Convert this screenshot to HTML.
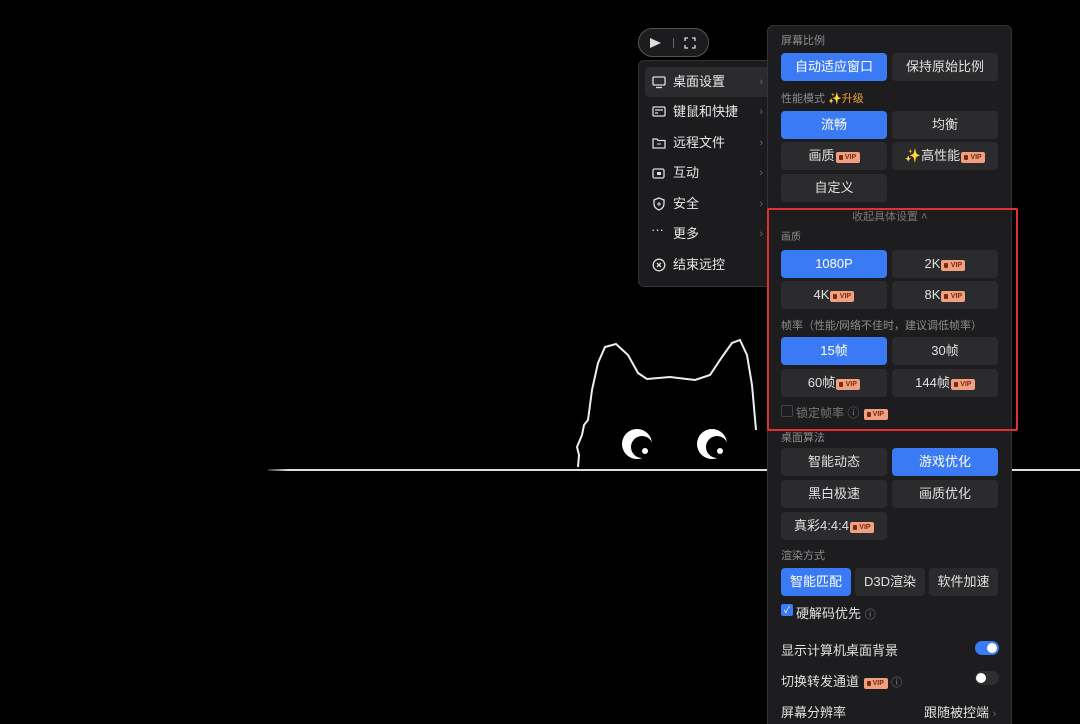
<!DOCTYPE html>
<html style="overflow:hidden;width:1080px;height:724px"><head><meta charset="utf-8"><style>
*{margin:0;padding:0;box-sizing:border-box}
body{width:1080px;height:724px;background:#000;overflow:hidden;position:relative;font-family:"Liberation Sans","Noto Sans CJK SC",sans-serif;color:#e8e8e8}
.abs{position:absolute}
.pill{left:638px;top:28px;width:71px;height:29px;border:1px solid #555;border-radius:15px;background:#1c1c1e}
.menu{left:638px;top:60px;width:140px;height:227px;background:#1c1c1e;border:1px solid #333;border-radius:6px}
.mi{position:absolute;left:6px;width:126px;height:30px;font-size:13px;line-height:30px;padding-left:28px;color:#e8e8e8}
.mi.sel{background:#2b2b2d;border-radius:5px}
.mi .ic{position:absolute;left:7px;top:8px;width:14px;height:14px}
.mi .ar{position:absolute;right:8px;top:0;color:#666;font-size:11px}
.panel{left:767px;top:25px;width:245px;height:710px;background:#1d1d1f;border:1px solid #333;border-radius:6px}
.lb{position:absolute;left:781px;font-size:11px;color:#8c8c8c}
.b{position:absolute;height:28px;background:#2b2b2d;border-radius:4px;font-size:13px;line-height:28px;text-align:center;color:#e0e0e0}
.b.on{background:#3a7af5;color:#fff}
.c1{left:781px;width:106px}.c2{left:892px;width:106px}
.vip{display:inline-block;vertical-align:1px;height:11px;line-height:11px;font-size:7px;padding:0 3px 0 9px;background:#f0a080;color:#7a2a10;border-radius:2px;margin-left:1px;font-weight:bold;position:relative;width:24px}
.vip:before{content:"";position:absolute;left:3px;top:3px;width:4px;height:5px;background:#7a2a10;border-radius:1px}
.red{left:767px;top:208px;width:251px;height:223px;border:2px solid #e03030;border-radius:2px}
.row{position:absolute;left:781px;font-size:13px;color:#e0e0e0}
</style></head><body>
<div class="abs" style="left:268px;top:469px;width:812px;height:2px;background:linear-gradient(90deg,rgba(255,255,255,0.2),#ddd 20px,#ddd)"></div>
<svg class="abs" style="left:570px;top:335px" width="200" height="140" viewBox="0 0 200 140">
<path d="M8 132 L9 120 L7 112 L12 100 L14 90 L18 85 L22 55 L28 28 L35 12 L46 9 L58 20 L68 38 L77 44 L100 42 L125 45 L140 40 L152 22 L162 8 L170 5 L177 20 L182 50 L186 95" fill="none" stroke="#eee" stroke-width="2"/>
<circle cx="67" cy="109" r="15" fill="#fff"/><circle cx="72" cy="112" r="11" fill="#000"/><circle cx="75" cy="116" r="3" fill="#fff"/>
<circle cx="142" cy="109" r="15" fill="#fff"/><circle cx="147" cy="112" r="11" fill="#000"/><circle cx="150" cy="116" r="3" fill="#fff"/>
</svg>
<div class="abs pill"><svg class="abs" style="left:10px;top:8px" width="14" height="12"><path d="M1 1 L12 6 L1 11 Z M1 1 L6 6 L1 11" fill="#ddd"/></svg><div class="abs" style="left:34px;top:9px;width:1px;height:10px;background:#666"></div><svg class="abs" style="left:45px;top:8px" width="12" height="12"><path d="M1 4V1H4M8 1H11V4M11 8V11H8M4 11H1V8" fill="none" stroke="#ddd" stroke-width="1.3"/></svg></div>
<div class="abs menu">
<div class="mi sel" style="top:6px"><svg class="ic" viewBox="0 0 14 14"><rect x="1" y="2" width="12" height="8" rx="1" fill="none" stroke="#ddd" stroke-width="1.3"/><path d="M4 12.5H10" stroke="#ddd" stroke-width="1.3"/></svg>桌面设置<span class="ar">›</span></div>
<div class="mi" style="top:36px"><svg class="ic" viewBox="0 0 14 14"><rect x="1" y="2" width="12" height="9" rx="1" fill="none" stroke="#ddd" stroke-width="1.3"/><path d="M3 5h8M3 8h3" stroke="#ddd" stroke-width="1.3"/></svg>键鼠和快捷<span class="ar">›</span></div>
<div class="mi" style="top:67px"><svg class="ic" viewBox="0 0 14 14"><path d="M1 3h4l1 1.5h7V12H1Z" fill="none" stroke="#ddd" stroke-width="1.3"/><path d="M5 8h4" stroke="#ddd"/></svg>远程文件<span class="ar">›</span></div>
<div class="mi" style="top:97px"><svg class="ic" viewBox="0 0 14 14"><rect x="1" y="3" width="11" height="9" rx="1.5" fill="none" stroke="#ddd" stroke-width="1.3"/><rect x="5" y="6" width="4" height="3" fill="#ddd"/></svg>互动<span class="ar">›</span></div>
<div class="mi" style="top:128px"><svg class="ic" viewBox="0 0 14 14"><path d="M7 1L12 3V7C12 10 9.5 12 7 13C4.5 12 2 10 2 7V3Z" fill="none" stroke="#ddd" stroke-width="1.3"/><path d="M7 5v4M5 7h4" stroke="#ddd"/></svg>安全<span class="ar">›</span></div>
<div class="mi" style="top:158px"><span class="abs" style="left:6px;top:-4px;font-size:13px">···</span>更多<span class="ar">›</span></div>
<div class="mi" style="top:189px"><svg class="ic" viewBox="0 0 14 14"><circle cx="7" cy="7" r="5.8" fill="none" stroke="#ddd" stroke-width="1.3"/><path d="M5 5l4 4M9 5l-4 4" stroke="#ddd" stroke-width="1.3"/></svg>结束远控</div>
</div>
<div class="abs panel"></div>
<div class="lb" style="top:32px">屏幕比例</div>
<div class="b on c1" style="top:53px">自动适应窗口</div><div class="b c2" style="top:53px">保持原始比例</div>
<div class="lb" style="top:90px">性能模式 <span style="color:#f0a020">✨升级</span></div>
<div class="b on c1" style="top:111px">流畅</div><div class="b c2" style="top:111px">均衡</div>
<div class="b c1" style="top:142px">画质<span class="vip">VIP</span></div><div class="b c2" style="top:142px">✨高性能<span class="vip">VIP</span></div>
<div class="b c1" style="top:174px">自定义</div>
<div class="lb" style="top:208px;left:852px;color:#777">收起具体设置 ˄</div>
<div class="lb" style="top:228px;font-size:10px">画质</div>
<div class="b on c1" style="top:250px">1080P</div><div class="b c2" style="top:250px">2K<span class="vip">VIP</span></div>
<div class="b c1" style="top:281px">4K<span class="vip">VIP</span></div><div class="b c2" style="top:281px">8K<span class="vip">VIP</span></div>
<div class="lb" style="top:317px">帧率（性能/网络不佳时，建议调低帧率）</div>
<div class="b on c1" style="top:337px">15帧</div><div class="b c2" style="top:337px">30帧</div>
<div class="b c1" style="top:369px">60帧<span class="vip">VIP</span></div><div class="b c2" style="top:369px">144帧<span class="vip">VIP</span></div>
<div class="abs" style="left:781px;top:405px;width:12px;height:12px;border:1px solid #444;border-radius:2px"></div>
<div class="lb" style="top:404px;left:796px;font-size:12px;color:#777">锁定帧率 ⓘ <span class="vip">VIP</span></div>
<div class="abs red"></div>
<div class="lb" style="top:429px">桌面算法</div>
<div class="b c1" style="top:448px">智能动态</div><div class="b on c2" style="top:448px">游戏优化</div>
<div class="b c1" style="top:480px">黑白极速</div><div class="b c2" style="top:480px">画质优化</div>
<div class="b c1" style="top:512px">真彩4:4:4<span class="vip">VIP</span></div>
<div class="lb" style="top:547px">渲染方式</div>
<div class="b on" style="top:568px;left:781px;width:70px">智能匹配</div><div class="b" style="top:568px;left:855px;width:70px">D3D渲染</div><div class="b" style="top:568px;left:929px;width:69px">软件加速</div>
<div class="abs" style="left:781px;top:604px;width:12px;height:12px;background:#3a7af5;border-radius:2px;color:#fff;font-size:9px;line-height:12px;text-align:center">✓</div>
<div class="row" style="top:603px;left:796px">硬解码优先 <span style="color:#888;font-size:11px">ⓘ</span></div>
<div class="row" style="top:640px">显示计算机桌面背景</div>
<div class="abs" style="left:975px;top:641px;width:24px;height:14px;border-radius:7px;background:#3a7af5"><div class="abs" style="left:12px;top:2px;width:10px;height:10px;border-radius:5px;background:#fff"></div></div>
<div class="row" style="top:671px">切换转发通道 <span class="vip">VIP</span> <span style="color:#888;font-size:11px">ⓘ</span></div>
<div class="abs" style="left:975px;top:671px;width:24px;height:14px;border-radius:7px;background:#2e2e30"><div class="abs" style="left:1px;top:2px;width:10px;height:10px;border-radius:5px;background:#fff"></div></div>
<div class="row" style="top:702px">屏幕分辨率</div>
<div class="row" style="top:702px;left:924px">跟随被控端 <span style="color:#666;font-size:11px">›</span></div>
</body></html>
